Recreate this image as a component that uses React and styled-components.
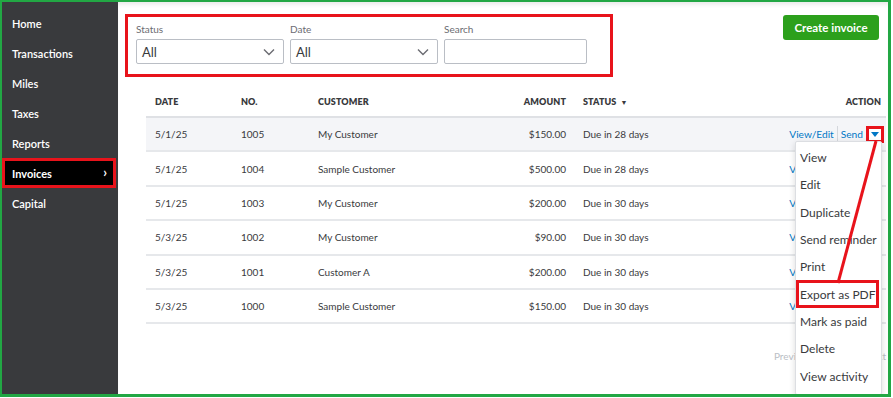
import React from "react";
import styled, { createGlobalStyle } from "styled-components";

const GlobalStyle = createGlobalStyle`
  html, body {
    margin: 0;
    padding: 0;
    background: #fff;
    font-family: Lato, "Open Sans", Arial, sans-serif;
  }
  * { box-sizing: border-box; }
`;

const RED = "#e8131b";

const navItems = ["Home", "Transactions", "Miles", "Taxes", "Reports", "Invoices", "Capital"];

const invoices = [
  { date: "5/1/25", no: "1005", customer: "My Customer", amount: "$150.00", status: "Due in 28 days" },
  { date: "5/1/25", no: "1004", customer: "Sample Customer", amount: "$500.00", status: "Due in 28 days" },
  { date: "5/1/25", no: "1003", customer: "My Customer", amount: "$200.00", status: "Due in 30 days" },
  { date: "5/3/25", no: "1002", customer: "My Customer", amount: "$90.00", status: "Due in 30 days" },
  { date: "5/3/25", no: "1001", customer: "Customer A", amount: "$200.00", status: "Due in 30 days" },
  { date: "5/3/25", no: "1000", customer: "Sample Customer", amount: "$150.00", status: "Due in 30 days" },
];

const menuItems = [
  "View",
  "Edit",
  "Duplicate",
  "Send reminder",
  "Print",
  "Export as PDF",
  "Mark as paid",
  "Delete",
  "View activity",
];

const Chevron = () => (
  <svg width="12" height="8" viewBox="0 0 12 8">
    <polyline points="1,1.5 6,6.5 11,1.5" fill="none" stroke="#6b6c72" strokeWidth="1.4" />
  </svg>
);

const App = () => {
  return (
    <>
      <GlobalStyle />
      <Frame>
        <Sidebar>
          {navItems.map((n) => (
            <NavItem key={n} active={n === "Invoices"}>
              {n}
              {n === "Invoices" && <NavArrow>›</NavArrow>}
            </NavItem>
          ))}
        </Sidebar>

        <Main>
          <TopBar>
            <FilterBox>
              <Field w={148}>
                <Label>Status</Label>
                <Select>
                  All
                  <Chevron />
                </Select>
              </Field>
              <Field w={148}>
                <Label>Date</Label>
                <Select>
                  All
                  <Chevron />
                </Select>
              </Field>
              <Field w={143}>
                <Label>Search</Label>
                <SearchInput />
              </Field>
            </FilterBox>
            <CreateButton>Create invoice</CreateButton>
          </TopBar>

          <Table>
            <HeadRow>
              <Cell>DATE</Cell>
              <Cell>NO.</Cell>
              <Cell>CUSTOMER</Cell>
              <Cell align="right">AMOUNT</Cell>
              <Cell>
                STATUS <SortIcon>▼</SortIcon>
              </Cell>
              <Cell align="right" last>
                ACTION
              </Cell>
            </HeadRow>
            {invoices.map((r, i) => (
              <Row key={r.no} highlighted={i === 0}>
                <Cell>{r.date}</Cell>
                <Cell>{r.no}</Cell>
                <Cell>{r.customer}</Cell>
                <Cell align="right">{r.amount}</Cell>
                <Cell>{r.status}</Cell>
                <ActionCell>
                  <Link>View/Edit</Link>
                  <Divider />
                  <Link>Send</Link>
                  <ArrowBox marked={i === 0}>
                    <Triangle />
                  </ArrowBox>
                </ActionCell>
              </Row>
            ))}
          </Table>

          <Pager>
            <span>Previous</span>
            <span>1-6 of 6</span>
            <span>Next</span>
          </Pager>

          <Menu>
            {menuItems.map((m) => (
              <MenuItem key={m} marked={m === "Export as PDF"}>
                {m}
              </MenuItem>
            ))}
          </Menu>
        </Main>

        {/* annotation arrow from dropdown toggle to the export item */}
        <Annotation width="893" height="398">
          <line x1="876" y1="141" x2="838" y2="283" stroke={RED} strokeWidth="3" />
        </Annotation>
      </Frame>
    </>
  );
};

const Frame = styled.div`
  position: relative;
  width: 891px;
  height: 397px;
  display: flex;
  border: 2px solid #22a744;
  border-bottom-width: 3px;
  border-right-width: 3px;
  overflow: hidden;
`;

const Sidebar = styled.nav`
  width: 116px;
  flex-shrink: 0;
  background: #393a3d;
  padding-top: 6px;
  display: flex;
  flex-direction: column;
`;

const NavItem = styled.div`
  position: relative;
  height: 30px;
  display: flex;
  align-items: center;
  padding-left: 10px;
  margin-right: ${(p) => (p.active ? "2px" : "0")};
  font-size: 11px;
  font-weight: ${(p) => (p.active ? 700 : 600)};
  color: #fff;
  background: ${(p) => (p.active ? "#000" : "transparent")};
  outline: ${(p) => (p.active ? `3px solid ${RED}` : "none")};
  outline-offset: -3px;
`;

const NavArrow = styled.span`
  position: absolute;
  right: 9px;
  top: 6px;
  font-size: 13px;
  font-weight: 700;
`;

const Main = styled.main`
  position: relative;
  flex: 1;
  min-width: 0;
  background: #fff;
  box-shadow: inset 0 5px 5px -3px rgba(0, 0, 0, 0.1);
  padding: 12px 2px 0 7px;
`;

const TopBar = styled.div`
  display: flex;
  justify-content: space-between;
  align-items: flex-start;
  padding-right: 7px;
`;

const FilterBox = styled.div`
  width: 488px;
  height: 63px;
  border: 3px solid ${RED};
  display: flex;
  gap: 6px;
  padding: 5px 0 0 8px;
`;

const Field = styled.div`
  width: ${(p) => p.w}px;
  display: flex;
  flex-direction: column;
`;

const Label = styled.label`
  font-size: 10px;
  color: #6b6c72;
  height: 14px;
  line-height: 14px;
  margin-bottom: 3px;
`;

const Select = styled.div`
  height: 25px;
  border: 1px solid #babec5;
  border-radius: 2px;
  display: flex;
  align-items: center;
  justify-content: space-between;
  padding: 0 8px 0 5px;
  font-size: 13px;
  color: #393a3d;
`;

const SearchInput = styled.div`
  height: 25px;
  border: 1px solid #babec5;
  border-radius: 2px;
`;

const CreateButton = styled.button`
  margin-top: 1px;
  width: 96px;
  height: 25px;
  border: none;
  border-radius: 3px;
  background: #2ca01c;
  color: #fff;
  font-family: inherit;
  font-size: 11.5px;
  font-weight: 700;
  padding: 0;
`;

const Table = styled.div`
  margin: 9px 0 0 21px;
`;

const grid = `
  display: grid;
  grid-template-columns: 86px 77px 161px 104px 146px 1fr;
  align-items: center;
`;

const HeadRow = styled.div`
  ${grid}
  height: 32px;
  border-bottom: 2px solid #dfe1e5;
  font-size: 9px;
  font-weight: 800;
  color: #393a3d;
  letter-spacing: 0.1px;
`;

const Row = styled.div`
  ${grid}
  height: 34.4px;
  border-bottom: 2px solid #e6e8eb;
  background: ${(p) => (p.highlighted ? "#f4f5f8" : "#fff")};
  font-size: 10px;
  color: #393a3d;
`;

const Cell = styled.div`
  padding: 0 ${(p) => (p.last ? "5px" : p.align === "right" ? "8px" : "0")} 0 9px;
  text-align: ${(p) => p.align || "left"};
  white-space: nowrap;
`;

const SortIcon = styled.span`
  font-size: 7px;
  margin-left: 2px;
`;

const ActionCell = styled.div`
  display: flex;
  align-items: center;
  justify-content: flex-end;
  padding-right: 2px;
  font-size: 10.2px;
`;

const Link = styled.span`
  color: #0077c5;
`;

const Divider = styled.span`
  width: 1px;
  height: 16px;
  background: #d4d7dc;
  margin: 0 3px 0 3px;
`;

const ArrowBox = styled.span`
  width: 18px;
  height: 17px;
  margin-left: 3px;
  display: flex;
  align-items: center;
  justify-content: center;
  border: 3px solid ${(p) => (p.marked ? RED : "transparent")};
  background: #fff;
`;

const Triangle = styled.span`
  width: 0;
  height: 0;
  border-left: 4px solid transparent;
  border-right: 4px solid transparent;
  border-top: 5px solid #0077c5;
`;

const Pager = styled.div`
  margin: 26px 0 0 21px;
  display: flex;
  justify-content: flex-end;
  gap: 9px;
  font-size: 10px;
  color: #babec5;
`;

const Menu = styled.div`
  position: absolute;
  left: 677px;
  top: 139px;
  width: 87px;
  height: 254px;
  background: #fff;
  border: 1px solid #dcdee2;
  border-radius: 2px;
  box-shadow: 0 2px 6px rgba(0, 0, 0, 0.15);
  padding-top: 2px;
  z-index: 5;
`;

const MenuItem = styled.div`
  height: 27.3px;
  display: flex;
  align-items: center;
  padding-left: 4px;
  margin-right: 2px;
  font-size: 12px;
  color: #393a3d;
  white-space: nowrap;
  outline: ${(p) => (p.marked ? `3px solid ${RED}` : "none")};
  outline-offset: -3px;
`;

const Annotation = styled.svg`
  position: absolute;
  left: -2px;
  top: -2px;
  pointer-events: none;
  z-index: 10;
`;

export default App;
